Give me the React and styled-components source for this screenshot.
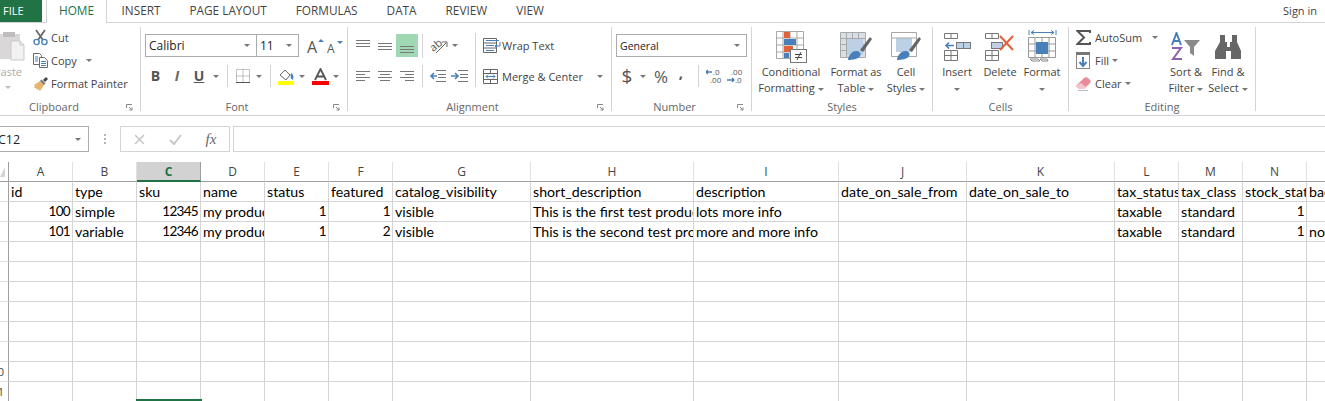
import React from "react";
import styled, { createGlobalStyle } from "styled-components";

const UI_FONT = `"Open Sans", "Noto Sans", sans-serif`;
const CELL_FONT = `Lato, "Liberation Sans", sans-serif`;
const BLUE = "#4a80b9";
const RED = "#e2613a";

const GlobalStyle = createGlobalStyle`
    html, body { margin: 0; padding: 0; background: #fff; }
`;

const Page = styled.div`
    width: 1325px;
    height: 401px;
    overflow: hidden;
    background: #fff;
    color: #444;
    font-family: ${UI_FONT};
    font-size: 11px;
`;

/* tabs */
const TabBar = styled.div`
    display: flex;
    height: 23px;
    box-sizing: border-box;
    border-bottom: 1px solid #d4d4d4;
    font-size: 11.8px;
`;

const FileTab = styled.div`
    width: 42px;
    height: 22px;
    box-sizing: border-box;
    padding-left: 3px;
    margin-right: 4px;
    background: #217346;
    color: #fff;
    font-size: 11px;
    line-height: 21px;
`;

const ActiveTab = styled.div`
    width: 61px;
    height: 23px;
    box-sizing: border-box;
    border: 1px solid #d4d4d4;
    border-top: 0;
    border-bottom: 0;
    background: #fff;
    color: #217346;
    line-height: 21px;
    text-align: center;
`;

const Tab = styled.div`
    padding: 0 14.5px;
    line-height: 21px;
    white-space: nowrap;
`;

const SignIn = styled.div`
    margin-left: auto;
    padding-right: 8px;
    font-size: 11px;
    line-height: 21px;
`;

/* ribbon */
const Ribbon = styled.div`
    display: flex;
    align-items: flex-start;
    height: 93px;
    box-sizing: border-box;
    padding-top: 4px;
    border-bottom: 1px solid #d4d4d4;
`;

const Group = styled.div`
    flex: none;
    width: ${({ $w }) => $w}px;
    height: 84px;
    margin-left: ${({ $pull }) => $pull || 0}px;
    box-sizing: border-box;
    border-right: 1px solid #d4d4d4;
`;

const GroupBody = styled.div`
    display: flex;
    height: 71px;
    padding-left: ${({ $pad }) => $pad || 0}px;
`;

const GroupFooter = styled.div`
    display: flex;
    align-items: center;
    height: 16px;
    color: #666;
`;

const GroupLabel = styled.div`
    flex: 1;
    text-align: center;
`;

const LauncherBox = styled.div`
    display: flex;
    width: 14px;
    height: 16px;
    padding-top: 2px;
    box-sizing: border-box;
    align-items: center;
`;

const Caret = styled.span`
    display: inline-block;
    flex: none;
    width: 0;
    height: 0;
    margin-left: ${({ $ml }) => $ml || 0}px;
    margin-top: ${({ $mt }) => $mt || 0}px;
    border-left: 3px solid transparent;
    border-right: 3px solid transparent;
    border-top: 3px solid ${({ $light }) => ($light ? "#bdbdbd" : "#777")};
    vertical-align: middle;
`;

const PasteColumn = styled.div`
    display: flex;
    flex-direction: column;
    align-items: center;
    width: 40px;
    padding-top: 4px;
    color: #aaa;
`;

const PasteLabel = styled.div`
    height: 16px;
    margin-top: 3px;
    line-height: 16px;
`;

const CommandColumn = styled.div`
    display: flex;
    flex-direction: column;
    width: ${({ $w }) => $w}px;
    margin-top: -1px;
    margin-left: ${({ $ml }) => $ml || 0}px;
`;

const CommandRow = styled.div`
    display: flex;
    align-items: center;
    height: 23px;
    white-space: nowrap;
`;

const CommandIcon = styled.div`
    display: flex;
    align-items: center;
    width: ${({ $w }) => $w || 18}px;
    flex: none;
`;

const Stack = styled.div`
    display: flex;
    flex-direction: column;
    padding-top: 7px;
`;

const ToolRow = styled.div`
    display: flex;
    align-items: center;
    height: ${({ $h }) => $h || 23}px;
    margin-top: ${({ $mt }) => $mt || 0}px;
`;

const Combo = styled.div`
    display: flex;
    align-items: center;
    justify-content: space-between;
    width: ${({ $w }) => $w}px;
    height: 23px;
    box-sizing: border-box;
    margin-left: ${({ $ml }) => $ml || 0}px;
    padding: 0 6px 0 3px;
    border: 1px solid #ababab;
    background: #fff;
    color: #222;
    font-size: 12px;
`;

const ComboNumberFormat = styled(Combo)`
    font-size: 10.5px;
`;

const Tool = styled.div`
    display: flex;
    align-items: center;
    justify-content: center;
    flex: none;
    width: ${({ $w }) => $w}px;
    height: ${({ $h }) => $h || 18}px;
    margin-left: ${({ $ml }) => $ml || 0}px;
    background: ${({ $on }) => ($on ? "#a0d8b3" : "transparent")};
`;

const Glyph = styled.span`
    display: inline-block;
    margin-bottom: ${({ $up }) => $up || 0}px;
    color: ${({ $c }) => $c || "#555"};
    font-family: ${({ $serif }) => ($serif ? `"Liberation Serif", serif` : UI_FONT)};
    font-size: ${({ $s }) => $s || 14}px;
    font-weight: ${({ $b }) => ($b ? 700 : 400)};
    font-style: ${({ $i }) => ($i ? "italic" : "normal")};
    text-decoration: ${({ $u }) => ($u ? "underline" : "none")};
    line-height: 1;
`;

const Sep = styled.div`
    flex: none;
    width: 1px;
    height: ${({ $h }) => $h || 22}px;
    margin: 0 ${({ $mr }) => $mr || 0}px 0 ${({ $ml }) => $ml || 0}px;
    background: #d4d4d4;
`;

const TallSep = styled(Sep)`
    height: 54px;
    margin-top: 6px;
`;

const WideCommand = styled.div`
    display: flex;
    align-items: center;
    height: 23px;
    margin-top: ${({ $mt }) => $mt || 0}px;
    white-space: nowrap;
`;

const LargeButton = styled.div`
    display: flex;
    flex-direction: column;
    align-items: center;
    flex: none;
    width: ${({ $w }) => $w}px;
    padding-top: 2px;
`;

const LargeIcon = styled.div`
    display: flex;
    align-items: center;
    justify-content: center;
    height: 35px;
`;

const LargeText = styled.div`
    height: 16px;
    line-height: 16px;
    white-space: nowrap;
    text-align: center;
`;

/* formula bar */
const FormulaBar = styled.div`
    display: flex;
    height: 46px;
    box-sizing: border-box;
    padding-top: 10px;
    padding-bottom: 10px;
`;

const NameBox = styled.div`
    display: flex;
    align-items: center;
    justify-content: space-between;
    width: 90px;
    box-sizing: border-box;
    margin-left: -1px;
    padding-right: 7px;
    border: 1px solid #ababab;
    color: #222;
    font-size: 12.5px;
`;

const NameValue = styled.span`
    margin-left: -2px;
`;

const Dots = styled.div`
    display: flex;
    flex-direction: column;
    justify-content: center;
    gap: 2px;
    width: 31px;
    align-items: center;
`;

const Dot = styled.span`
    width: 2px;
    height: 2px;
    background: #b5b5b5;
`;

const FxBox = styled.div`
    display: flex;
    align-items: center;
    width: 110px;
    box-sizing: border-box;
    border: 1px solid #d4d4d4;
`;

const FxButton = styled.div`
    display: flex;
    align-items: center;
    justify-content: center;
    width: 36px;
`;

const FormulaInput = styled.div`
    flex: 1;
    margin-left: 3px;
    border: 1px solid #d4d4d4;
    border-right: 0;
`;

/* sheet */
const Sheet = styled.div`
    display: grid;
    grid-template-columns: ${({ $cols }) => $cols};
    grid-auto-rows: 20px;
    width: 1325px;
    overflow: hidden;
`;

const CornerCell = styled.div`
    display: flex;
    align-items: flex-end;
    box-sizing: border-box;
    padding-bottom: 4px;
    border-right: 1px solid #9f9f9f;
    border-bottom: 1px solid #9f9f9f;
`;

const CornerMark = styled.span`
    width: 0;
    height: 0;
    border-top: 10px solid transparent;
    border-right: 5px solid #d4d4d4;
`;

const ColumnHead = styled.div`
    box-sizing: border-box;
    border-right: 1px solid ${({ $on }) => ($on ? "#9f9f9f" : "#e0e0e0")};
    border-bottom: ${({ $on }) => ($on ? "2px solid #217346" : "1px solid #9f9f9f")};
    background: ${({ $on }) => ($on ? "#d2d2d2" : "#fff")};
    color: ${({ $on }) => ($on ? "#217346" : "#444")};
    font-size: 12px;
    font-weight: ${({ $on }) => ($on ? 700 : 400)};
    line-height: 19px;
    text-align: center;
`;

const RowHead = styled.div`
    display: flex;
    justify-content: flex-end;
    overflow: hidden;
    box-sizing: border-box;
    padding-right: 4px;
    border-right: 1px solid #9f9f9f;
    border-bottom: 1px solid #e0e0e0;
    color: #444;
    font-size: 11px;
    line-height: 19px;
`;

const Cell = styled.div`
    position: relative;
    overflow: ${({ $mark }) => ($mark ? "visible" : "hidden")};
    box-sizing: border-box;
    padding: 0 2px;
    border-right: 1px solid #d4d4d4;
    border-bottom: 1px solid #d4d4d4;
    color: #000;
    font-family: ${CELL_FONT};
    font-size: ${({ $num }) => ($num ? 13.5 : 14.2)}px;
    letter-spacing: ${({ $num }) => ($num ? "-0.7px" : "0")};
    line-height: 19px;
    text-align: ${({ $num }) => ($num ? "right" : "left")};
    white-space: nowrap;
`;

const SelectionEdge = styled.span`
    position: absolute;
    left: -1px;
    right: -2px;
    bottom: 0;
    height: 2px;
    background: #217346;
`;

/* drawings */
const PasteIcon = () => (
    <svg width="40" height="30" viewBox="0 0 40 30">
        <rect x="12" y="3" width="20" height="25" fill="#d9d7d8" />
        <rect x="15" y="1" width="12" height="5" fill="#bfbdbe" />
        <path d="M23 10h9l4 4v15H23z" fill="#f2f2f2" stroke="#c9c9c9" />
        <path d="M32 10v4h4" fill="none" stroke="#c9c9c9" />
    </svg>
);

const ScissorsIcon = () => (
    <svg width="15" height="17" viewBox="0 0 15 17">
        <path d="M3 1l7 10M12 1L5 11" stroke="#6a6a6a" strokeWidth="1.8" fill="none" />
        <circle cx="3.6" cy="13" r="2.6" fill="none" stroke={BLUE} strokeWidth="1.4" />
        <circle cx="11.4" cy="13" r="2.6" fill="none" stroke={BLUE} strokeWidth="1.4" />
    </svg>
);

const CopyIcon = () => (
    <svg width="15" height="15" viewBox="0 0 15 15">
        <path d="M.5.5h6l2 2v9h-8z" fill="#fff" stroke="#6a6a6a" />
        <path d="M6.5 4.5h5l3 3v7h-8z" fill="#fff" stroke="#6a6a6a" />
        <path d="M2 4h3M2 6h3M2 8h3M8 8.500h5M8 10.500h5M8 12.500h5" stroke={BLUE} />
    </svg>
);

const BrushIcon = () => (
    <svg width="16" height="16" viewBox="0 0 16 16">
        <path d="M1 9l6-4 4 4-4 6-2-2-1 1-1-2-2 0 1-2z" fill="#e8b46c" />
        <path d="M7 5l4 4 1.500-1.500-4-4z" fill="#777" />
        <path d="M10 4l3-3 2 2-3 3z" fill="#444" />
    </svg>
);

const FontGrowIcon = ({ small }) => (
    <svg width="18" height="16" viewBox="0 0 18 16">
        <text x="1" y="15" fontFamily="Open Sans" fontSize={small ? 12 : 16} fill="#555">A</text>
        <path d={small ? "M11 3h6l-3 3z" : "M12 4l3-3 3 3z"} fill={BLUE} />
    </svg>
);

const BorderIcon = () => (
    <svg width="14" height="14" viewBox="0 0 14 14">
        <path d="M.5.500h13v13H.5zM7 .500v13M.500 7h13" fill="none" stroke="#888" strokeDasharray="1 1" />
        <path d="M0 13.500h14" stroke="#555" />
    </svg>
);

const FillIcon = () => (
    <svg width="17" height="17" viewBox="0 0 17 17">
        <path d="M2 7l5-5 5 5-4 5z" fill="#fff" stroke="#666" />
        <path d="M13 5c2 1 3 3 2 7-2-1-3-3-2-7z" fill={BLUE} />
        <rect x="0" y="13" width="16" height="4" fill="#ffff00" />
    </svg>
);

const FontColorIcon = () => (
    <svg width="17" height="17" viewBox="0 0 17 17">
        <path d="M3 12L8.500 1 14 12M5 8.500h7" fill="none" stroke="#555" strokeWidth="1.800" />
        <rect x="0" y="13" width="17" height="4" fill="#ff0000" />
    </svg>
);

const LinesIcon = ({ rows, ys = [0, 3, 6], color = "#777", width = 14 }) => (
    <svg width={width} height="14" viewBox={`0 0 ${width} 14`}>
        {ys.map((y, i) => (
            <path key={i} d={`M${rows ? rows[i][0] : 0} ${y + 0.5}H${rows ? rows[i][1] : width}`} stroke={color} />
        ))}
    </svg>
);

const OrientIcon = () => (
    <svg width="18" height="17" viewBox="0 0 18 17">
        <text x="0" y="12" fontFamily="Open Sans" fontSize="11" fill="#555" transform="rotate(-40 6 9)">ab</text>
        <path d="M6 16L16 6M12 5h5v5" fill="none" stroke="#666" />
    </svg>
);

const IndentIcon = ({ right }) => (
    <svg width="17" height="12" viewBox="0 0 17 12">
        <path d="M7 .500h10M9 4.500h8M9 7.500h8M7 11.500h10" stroke="#777" />
        <path d={right ? "M0 6h6M4 3l3 3-3 3" : "M2 6h6M5 3L2 6l3 3"} fill="none" stroke={BLUE} strokeWidth="1.600" />
    </svg>
);

const WrapIcon = () => (
    <svg width="18" height="15" viewBox="0 0 18 15">
        <path d="M.5.500h13v14H.5zM.5 5h13M.5 10h13" fill="none" stroke="#666" />
        <path d="M3 2.500h13M3 7.500h8M3 12.500h8" stroke={BLUE} />
        <path d="M17 4v4h-5M14 6l-2 2 2 2" fill="none" stroke={BLUE} />
    </svg>
);

const MergeIcon = () => (
    <svg width="15" height="15" viewBox="0 0 15 15">
        <path d="M.5.500h14v14H.5zM.5 4.500h14M.5 10.500h14M7.500.500v4M7.500 10.500v4" fill="none" stroke="#666" />
        <path d="M3 7.500h9M5 5.500l-2 2 2 2M10 5.500l2 2-2 2" fill="none" stroke={BLUE} />
    </svg>
);

const DecimalIcon = ({ more }) => (
    <svg width="16" height="16" viewBox="0 0 16 16">
        <text x={more ? 4 : 7} y="7" fontFamily="Open Sans" fontSize="8" fill="#555">{more ? ".00" : ".0"}</text>
        <text x={more ? 8 : 4} y="15" fontFamily="Open Sans" fontSize="8" fill="#555">{more ? ".0" : ".00"}</text>
        <path d={more ? "M0 12h7M5 10l2 2-2 2" : "M0 4h6M2 2L0 4l2 2"} fill="none" stroke={BLUE} strokeWidth="1.300" />
    </svg>
);

const CondIcon = () => (
    <svg width="31" height="32" viewBox="0 0 31 32">
        <path d="M.5.500h27v27H.5zM7 .500v27M14 .500v27M21 .500v27M.500 7h27M.500 14h27M.500 21h27" fill="none" stroke="#a8a8a8" />
        <rect x="8" y="1" width="6" height="6" fill={RED} />
        <rect x="8" y="8" width="12" height="6" fill={BLUE} />
        <rect x="8" y="15" width="9" height="6" fill={RED} />
        <rect x="8" y="22" width="5" height="5" fill={BLUE} />
        <rect x="14.500" y="18.500" width="16" height="13" fill="#fff" stroke="#777" />
        <path d="M19 23.500h7M19 26.500h7M25 21l-4 8" fill="none" stroke="#444" />
    </svg>
);

const TableStyleIcon = () => (
    <svg width="32" height="29" viewBox="0 0 32 29">
        <path d="M.5.500h25v25H.5zM6.500.500v25M12.500.500v25M18.500.500v25M.500 6.500h25M.500 12.500h25M.500 18.500h25" fill="#d9dfe6" stroke="#a8a8a8" />
        <rect x="7" y="7" width="16" height="16" fill="#bcd0e6" />
        <path d="M20 18L30 5l2 2-9 13z" fill="#666" />
        <path d="M8 28c0-4 4-9 8-9 3 0 6 2 4 5-1 3-8 4-12 4z" fill={BLUE} />
    </svg>
);

const CellStyleIcon = () => (
    <svg width="30" height="29" viewBox="0 0 30 29">
        <path d="M.5.500h25v24H.5z" fill="#fff" stroke="#a8a8a8" />
        <rect x="5" y="6" width="16" height="14" fill="#bcd0e6" />
        <path d="M.5 6h25" stroke="#a8a8a8" />
        <path d="M18 18L28 5l2 2-9 13z" fill="#666" />
        <path d="M6 28c0-4 4-9 8-9 3 0 6 2 4 5-1 3-8 4-12 4z" fill={BLUE} />
    </svg>
);

const InsertIcon = () => (
    <svg width="27" height="28" viewBox="0 0 27 28">
        <path d="M.5.500h13v5H.5zM7 .500v5M.500 17.500h13v10H.5zM7 17.500v10M.500 22.500h13" fill="none" stroke="#777" />
        <rect x="12.500" y="9.500" width="14" height="6" fill="#bcd0e6" stroke="#777" />
        <path d="M19.500 9.500v6" stroke="#777" />
        <path d="M2 12.500h8M5 9.500l-3 3 3 3" fill="none" stroke={BLUE} strokeWidth="1.600" />
    </svg>
);

const DeleteIcon = () => (
    <svg width="30" height="28" viewBox="0 0 30 28">
        <path d="M.5.500h13v5H.5zM7 .500v5M.500 17.500h13v10H.5zM7 17.500v10M.500 22.500h13" fill="none" stroke="#777" />
        <rect x="6.500" y="9.500" width="11" height="6" fill="#bcd0e6" stroke="#777" />
        <path d="M15 3l13 14M28 3L15 17" stroke={RED} strokeWidth="2" />
    </svg>
);

const FormatIcon = () => (
    <svg width="29" height="33" viewBox="0 0 29 33">
        <path d="M1 0v5M28 0v5M3 2.500h23M6 .500l-3 2 3 2M23 .500l3 2-3 2" fill="none" stroke={BLUE} />
        <path d="M.5 7.500h27v20H.5zM7 7.500v20M21 7.500v20M.500 14h27M.500 21h27M14 7.500v6M14 23v4" fill="none" stroke="#999" />
        <rect x="8" y="12" width="12" height="12" fill={BLUE} />
        <path d="M2 29h8l2 2H4zM12 29h7l1 2h-6z" fill="none" stroke="#888" />
    </svg>
);

const SigmaIcon = () => (
    <svg width="15" height="15" viewBox="0 0 15 15">
        <path d="M14 3V1H1.500L8 7.500 1.500 14H14v-2" fill="none" stroke="#555" strokeWidth="2" />
    </svg>
);

const FillDownIcon = () => (
    <svg width="14" height="17" viewBox="0 0 14 17">
        <rect x=".5" y=".5" width="13" height="16" fill="#fff" stroke="#888" />
        <rect x="0" y="0" width="14" height="3" fill="#777" />
        <path d="M7 5v9M3.500 10L7 14l3.500-4" fill="none" stroke={BLUE} strokeWidth="2" />
    </svg>
);

const EraserIcon = () => (
    <svg width="15" height="14" viewBox="0 0 15 14">
        <path d="M0 9l8-8c1-1 3-1 4 0l2 2c1 1 1 2 0 3l-6 6H3z" fill="#e98b9c" />
        <path d="M0 9l3 3h5l2-2-5-4z" fill="#f3c4cd" />
        <path d="M2 13.500h10" stroke="#bbb" />
    </svg>
);

const SortIcon = () => (
    <svg width="30" height="29" viewBox="0 0 30 29">
        <path d="M1 13L5.500 1 10 13M2.500 9h6" fill="none" stroke={BLUE} strokeWidth="2" />
        <path d="M1 16h9L2 27h9" fill="none" stroke="#8f5fb0" strokeWidth="2" />
        <path d="M13 8h16l-6 7v9l-4-3v-6z" fill="#8a8a8a" />
    </svg>
);

const BinocularsIcon = () => (
    <svg width="27" height="25" viewBox="0 0 27 25">
        <path d="M5 1h5v7h2v5h3V8h2V1h5v7l4 9v8H16v-8h-5v8H0v-8l5-9z" fill="#666" />
    </svg>
);

const LauncherIcon = () => (
    <svg width="7" height="7" viewBox="0 0 7 7">
        <path d="M.5 4V.5H6M3 3l3 3M6 3.500V6H3.500" fill="none" stroke="#888" />
    </svg>
);

const CrossIcon = () => (
    <svg width="11" height="11" viewBox="0 0 11 11">
        <path d="M1 1l9 9M10 1l-9 9" stroke="#c8c8c8" strokeWidth="1.600" />
    </svg>
);

const CheckIcon = () => (
    <svg width="13" height="11" viewBox="0 0 13 11">
        <path d="M1 6l4 4 7-9" fill="none" stroke="#c8c8c8" strokeWidth="2" />
    </svg>
);

/* sheet data */
const columns = [
    ["A", 64], ["B", 64], ["C", 64], ["D", 64], ["E", 64], ["F", 64], ["G", 138], ["H", 163],
    ["I", 145], ["J", 128], ["K", 148], ["L", 64], ["M", 64], ["N", 64], ["O", 64],
];

const sheetRows = [
    ["id", "type", "sku", "name", "status", "featured", "catalog_visibility", "short_description", "description", "date_on_sale_from", "date_on_sale_to", "tax_status", "tax_class", "stock_status", "backorders"],
    [100, "simple", 12345, "my product", 1, 1, "visible", "This is the first test product", "lots more info", "", "", "taxable", "standard", 1, ""],
    [101, "variable", 12346, "my product", 1, 2, "visible", "This is the second test product", "more and more info", "", "", "taxable", "standard", 1, "no"],
];

const TOTAL_ROWS = 11;
const gridColumns = `9px ${columns.map(([, w]) => `${w}px`).join(" ")}`;

const SheetGrid = () => {
    const rows = Array.from({ length: TOTAL_ROWS }, (_, i) => sheetRows[i] || columns.map(() => ""));
    return (
        <Sheet $cols={gridColumns}>
            <CornerCell><CornerMark /></CornerCell>
            {columns.map(([letter]) => (
                <ColumnHead key={letter} $on={letter === "C"}>{letter}</ColumnHead>
            ))}
            {rows.map((row, r) => (
                <React.Fragment key={r}>
                    <RowHead>{r >= 9 ? String(r + 1).slice(-1) : ""}</RowHead>
                    {row.map((value, c) => {
                        const mark = r === TOTAL_ROWS - 1 && c === 2;
                        return (
                            <Cell key={c} $num={typeof value === "number"} $mark={mark}>
                                {value}
                                {mark && <SelectionEdge />}
                            </Cell>
                        );
                    })}
                </React.Fragment>
            ))}
        </Sheet>
    );
};

const Footer = ({ label, launcher }) => (
    <GroupFooter>
        <GroupLabel>{label}</GroupLabel>
        {launcher && <LauncherBox><LauncherIcon /></LauncherBox>}
    </GroupFooter>
);

const App = () => {
    return (
        <Page>
            <GlobalStyle />
            <TabBar>
                <FileTab>FILE</FileTab>
                <ActiveTab>HOME</ActiveTab>
                <Tab>INSERT</Tab>
                <Tab>PAGE LAYOUT</Tab>
                <Tab>FORMULAS</Tab>
                <Tab>DATA</Tab>
                <Tab>REVIEW</Tab>
                <Tab>VIEW</Tab>
                <SignIn>Sign in</SignIn>
            </TabBar>

            <Ribbon>
                <Group $w={159} $pull={-18}>
                    <GroupBody $pad={6}>
                        <PasteColumn>
                            <PasteIcon />
                            <PasteLabel>Paste</PasteLabel>
                            <Caret $light $mt={6} />
                        </PasteColumn>
                        <CommandColumn $w={100} $ml={5}>
                            <CommandRow><CommandIcon><ScissorsIcon /></CommandIcon>Cut</CommandRow>
                            <CommandRow><CommandIcon><CopyIcon /></CommandIcon>Copy<Caret $ml={9} /></CommandRow>
                            <CommandRow><CommandIcon><BrushIcon /></CommandIcon>Format Painter</CommandRow>
                        </CommandColumn>
                    </GroupBody>
                    <Footer label="Clipboard" launcher />
                </Group>

                <Group $w={207}>
                    <GroupBody $pad={4}>
                        <Stack>
                            <ToolRow>
                                <Combo $w={112}>Calibri<Caret /></Combo>
                                <Combo $w={43} $ml={-1}>11<Caret /></Combo>
                                <Tool $w={20} $h={23} $ml={6}><FontGrowIcon /></Tool>
                                <Tool $w={20} $h={23}><FontGrowIcon small /></Tool>
                            </ToolRow>
                            <ToolRow $h={18} $mt={10}>
                                <Tool $w={21}><Glyph $b>B</Glyph></Tool>
                                <Tool $w={22}><Glyph $i $b $c="#666">I</Glyph></Tool>
                                <Tool $w={22}><Glyph $u $b>U</Glyph></Tool>
                                <Tool $w={12}><Caret /></Tool>
                                <Sep $ml={5} $mr={2} />
                                <Tool $w={25}><BorderIcon /></Tool>
                                <Tool $w={8}><Caret /></Tool>
                                <Sep $ml={7} $mr={2} />
                                <Tool $w={26}><FillIcon /></Tool>
                                <Tool $w={6}><Caret /></Tool>
                                <Tool $w={26} $ml={2}><FontColorIcon /></Tool>
                                <Tool $w={6}><Caret /></Tool>
                            </ToolRow>
                        </Stack>
                    </GroupBody>
                    <Footer label="Font" launcher />
                </Group>

                <Group $w={264}>
                    <GroupBody $pad={4}>
                        <Stack>
                            <ToolRow>
                                <Tool $w={22} $h={23}><LinesIcon ys={[1, 4, 7]} /></Tool>
                                <Tool $w={22} $h={23}><LinesIcon ys={[4, 7, 10]} /></Tool>
                                <Tool $w={22} $h={23} $on><LinesIcon ys={[7, 10, 13]} /></Tool>
                                <Sep $ml={4} $mr={7} $h={24} />
                                <Tool $w={18}><OrientIcon /></Tool>
                                <Tool $w={14}><Caret /></Tool>
                            </ToolRow>
                            <ToolRow $h={18} $mt={10}>
                                <Tool $w={22}><LinesIcon ys={[2, 5, 8, 11]} rows={[[0, 14], [0, 9], [0, 14], [0, 9]]} /></Tool>
                                <Tool $w={22}><LinesIcon ys={[2, 5, 8, 11]} rows={[[0, 14], [2, 12], [0, 14], [2, 12]]} /></Tool>
                                <Tool $w={22}><LinesIcon ys={[2, 5, 8, 11]} rows={[[0, 14], [5, 14], [0, 14], [5, 14]]} /></Tool>
                                <Sep $ml={4} $mr={3} />
                                <Tool $w={22}><IndentIcon /></Tool>
                                <Tool $w={22}><IndentIcon right /></Tool>
                            </ToolRow>
                        </Stack>
                        <TallSep $ml={5} $mr={7} />
                        <Stack>
                            <WideCommand><CommandIcon $w={19}><WrapIcon /></CommandIcon>Wrap Text</WideCommand>
                            <WideCommand $mt={8}><CommandIcon $w={19}><MergeIcon /></CommandIcon>Merge &amp; Center<Caret $ml={14} /></WideCommand>
                        </Stack>
                    </GroupBody>
                    <Footer label="Alignment" launcher />
                </Group>

                <Group $w={140}>
                    <GroupBody $pad={4}>
                        <Stack>
                            <ToolRow><ComboNumberFormat $w={131}>General<Caret /></ComboNumberFormat></ToolRow>
                            <ToolRow $h={18} $mt={10}>
                                <Tool $w={22}><Glyph $s={19}>$</Glyph></Tool>
                                <Tool $w={10}><Caret /></Tool>
                                <Tool $w={20} $ml={3}><Glyph $s={17}>%</Glyph></Tool>
                                <Tool $w={20}><Glyph $s={15} $b $up={7}>,</Glyph></Tool>
                                <Sep $ml={7} $mr={4} />
                                <Tool $w={21}><DecimalIcon /></Tool>
                                <Tool $w={22}><DecimalIcon more /></Tool>
                            </ToolRow>
                        </Stack>
                    </GroupBody>
                    <Footer label="Number" launcher />
                </Group>

                <Group $w={181}>
                    <GroupBody $pad={5}>
                        <LargeButton $w={68}>
                            <LargeIcon><CondIcon /></LargeIcon>
                            <LargeText>Conditional</LargeText>
                            <LargeText>Formatting<Caret $ml={3} /></LargeText>
                        </LargeButton>
                        <LargeButton $w={62}>
                            <LargeIcon><TableStyleIcon /></LargeIcon>
                            <LargeText>Format as</LargeText>
                            <LargeText>Table<Caret $ml={3} /></LargeText>
                        </LargeButton>
                        <LargeButton $w={38}>
                            <LargeIcon><CellStyleIcon /></LargeIcon>
                            <LargeText>Cell</LargeText>
                            <LargeText>Styles<Caret $ml={3} /></LargeText>
                        </LargeButton>
                    </GroupBody>
                    <Footer label="Styles" />
                </Group>

                <Group $w={136}>
                    <GroupBody $pad={4}>
                        <LargeButton $w={40}>
                            <LargeIcon><InsertIcon /></LargeIcon>
                            <LargeText>Insert</LargeText>
                            <LargeText><Caret /></LargeText>
                        </LargeButton>
                        <LargeButton $w={46}>
                            <LargeIcon><DeleteIcon /></LargeIcon>
                            <LargeText>Delete</LargeText>
                            <LargeText><Caret /></LargeText>
                        </LargeButton>
                        <LargeButton $w={38}>
                            <LargeIcon><FormatIcon /></LargeIcon>
                            <LargeText>Format</LargeText>
                            <LargeText><Caret /></LargeText>
                        </LargeButton>
                    </GroupBody>
                    <Footer label="Cells" />
                </Group>

                <Group $w={187}>
                    <GroupBody $pad={7}>
                        <CommandColumn $w={89}>
                            <CommandRow><CommandIcon $w={19}><SigmaIcon /></CommandIcon>AutoSum<Caret $ml={10} /></CommandRow>
                            <CommandRow><CommandIcon $w={19}><FillDownIcon /></CommandIcon>Fill<Caret $ml={3} /></CommandRow>
                            <CommandRow><CommandIcon $w={19}><EraserIcon /></CommandIcon>Clear<Caret $ml={3} /></CommandRow>
                        </CommandColumn>
                        <LargeButton $w={42}>
                            <LargeIcon><SortIcon /></LargeIcon>
                            <LargeText>Sort &amp;</LargeText>
                            <LargeText>Filter<Caret $ml={3} /></LargeText>
                        </LargeButton>
                        <LargeButton $w={42}>
                            <LargeIcon><BinocularsIcon /></LargeIcon>
                            <LargeText>Find &amp;</LargeText>
                            <LargeText>Select<Caret $ml={3} /></LargeText>
                        </LargeButton>
                    </GroupBody>
                    <Footer label="Editing" />
                </Group>
            </Ribbon>

            <FormulaBar>
                <NameBox><NameValue>C12</NameValue><Caret /></NameBox>
                <Dots><Dot /><Dot /><Dot /></Dots>
                <FxBox>
                    <FxButton><CrossIcon /></FxButton>
                    <FxButton><CheckIcon /></FxButton>
                    <FxButton><Glyph $c="#666" $s={15} $i $serif>fx</Glyph></FxButton>
                </FxBox>
                <FormulaInput />
            </FormulaBar>

            <SheetGrid />
        </Page>
    );
};

export default App;
